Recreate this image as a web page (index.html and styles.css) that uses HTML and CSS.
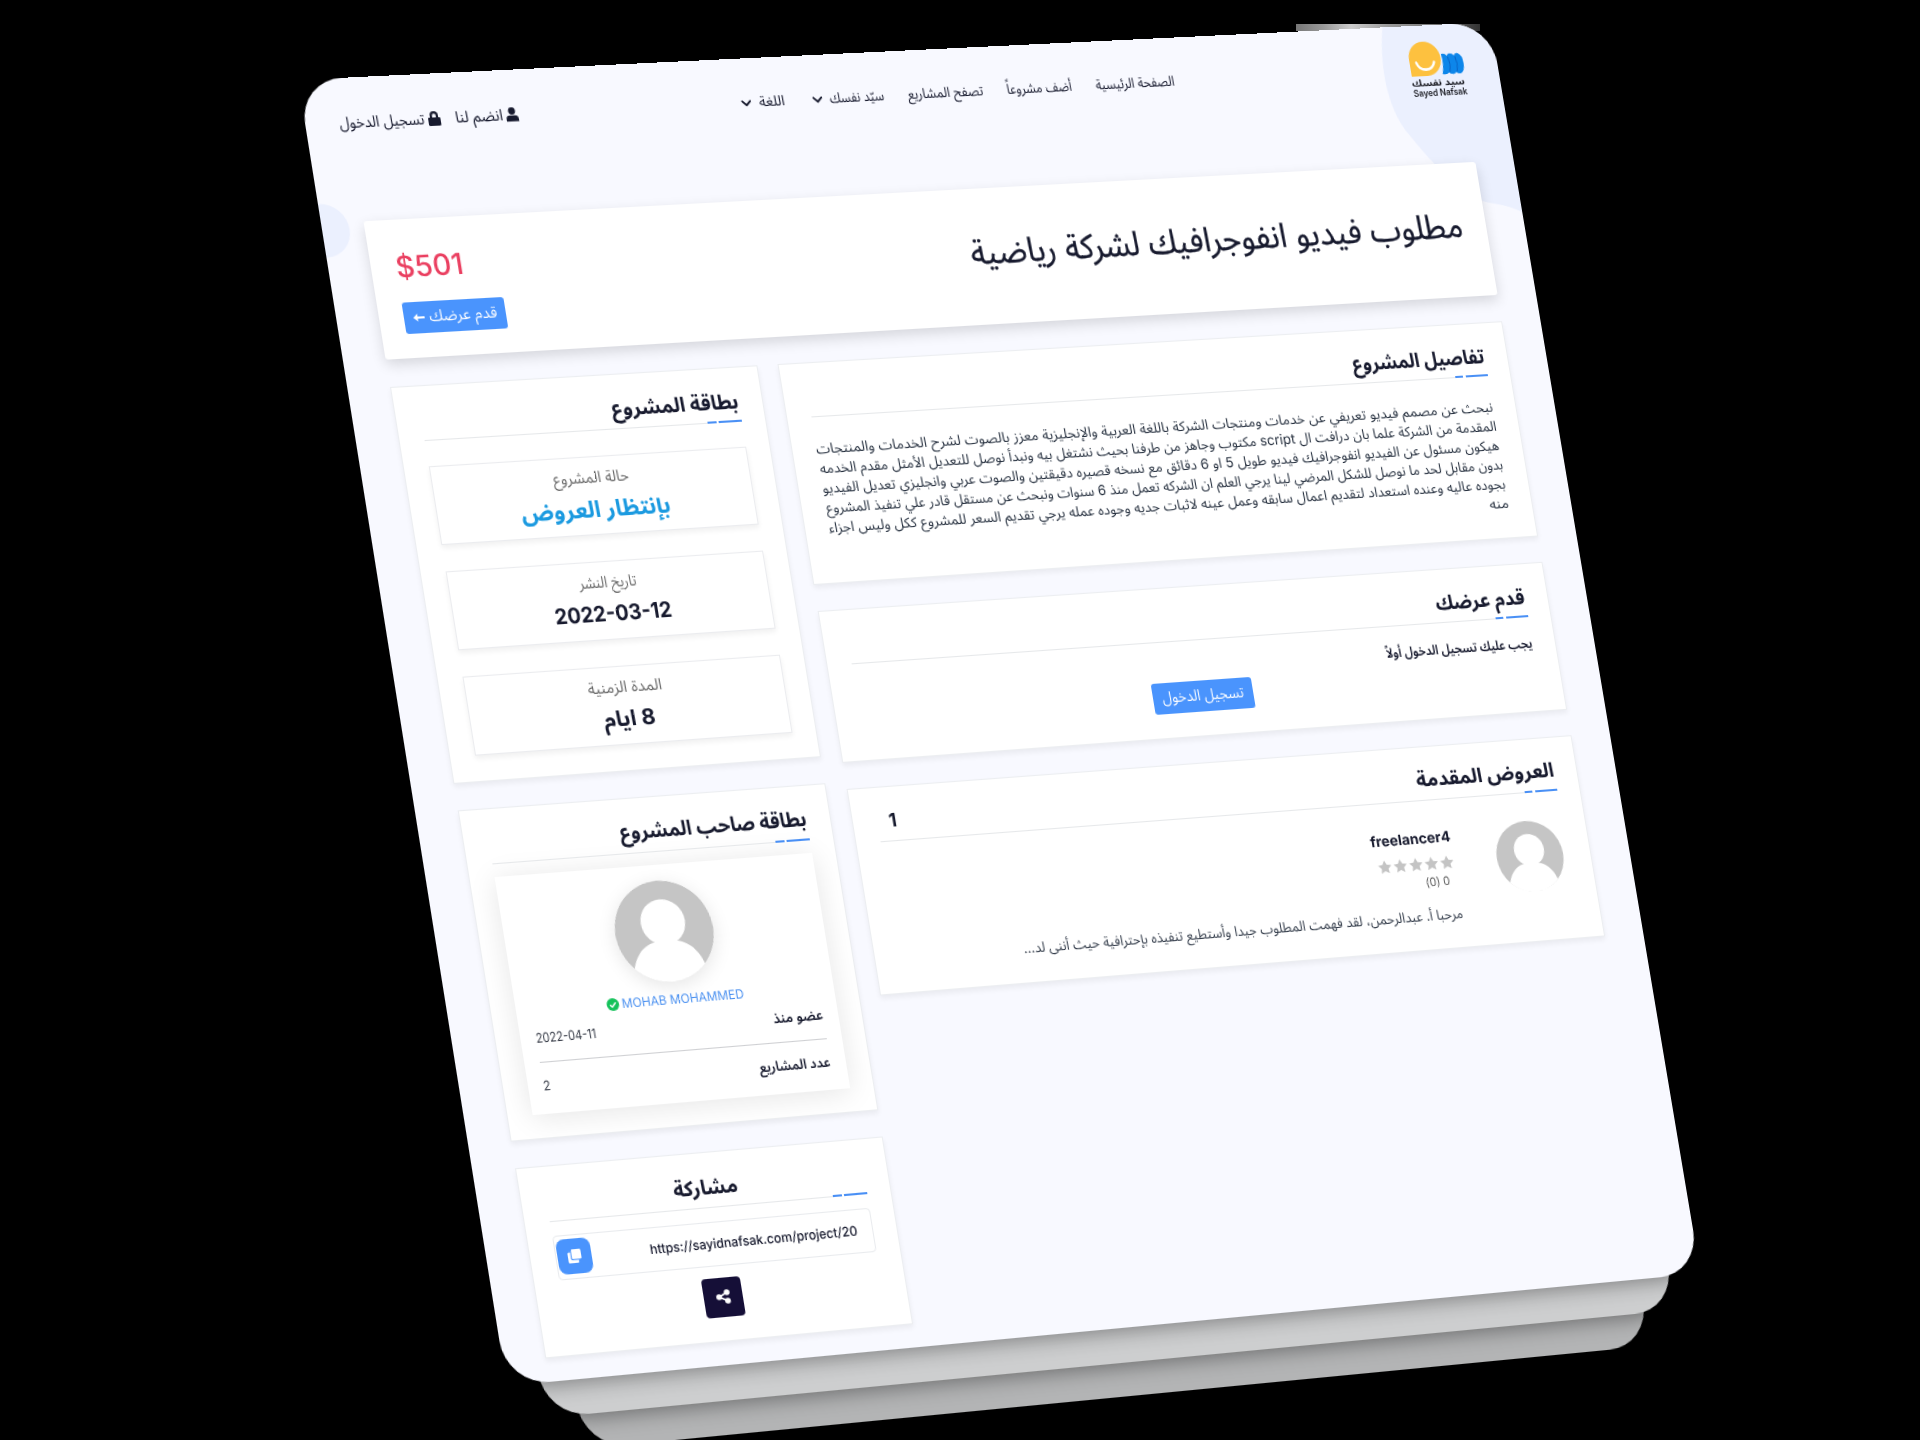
FILE: index.html
```html
<!DOCTYPE html>
<html lang="ar">
<head>
<meta charset="utf-8">
<title>سيد نفسك</title>
<link rel="stylesheet" href="styles.css">
</head>
<body>
<svg width="0" height="0" class="defs" aria-hidden="true">
  <symbol id="star" viewBox="0 0 24 24"><path d="M12 .8l3.500 7 7.700 1.100-5.600 5.400 1.400 7.700-7-3.700-7 3.700 1.400-7.700L.8 8.900l7.700-1.100z"/></symbol>
  <symbol id="chevron" viewBox="0 0 12 8"><path d="M1.500 1.500L6 6l4.500-4.500" fill="none" stroke="currentColor" stroke-width="2.100" stroke-linecap="round" stroke-linejoin="round"/></symbol>
  <symbol id="avatar" viewBox="0 0 100 100"><circle cx="50" cy="50" r="50" fill="#c5c5c5"/><circle cx="50" cy="41" r="22.500" fill="#fff"/><path d="M14 85C19 69 30 60 42 60h16c12 0 23 9 28 25a50 50 0 0 1-72 0z" fill="#fff"/></symbol>
</svg>
<div class="glare"></div>
<div class="stack">
  <div class="sheet sheet-back"></div>
  <div class="sheet sheet-mid"></div>
  <div class="page-shadow"></div>
  <div class="page" dir="rtl">
    <svg class="blobs" viewBox="0 0 1200 200" aria-hidden="true">
      <path d="M1087 0C1076 45 1080 85 1097 108C1106 122 1112 130 1122 143C1140 165 1155 176 1172 179Q1188 182 1200 189V0z"/>
      <circle cx="1" cy="144" r="25.500"/>
    </svg>

    <header class="topbar">
      <svg class="logo" viewBox="0 0 56 56">
        <path d="M1 34V16.500a16.500 17 0 1 1 17 17.500z" fill="#fdc13f"/>
        <path d="M8 20.500c2 9.500 16 9.500 18.500 0" fill="none" stroke="#fff" stroke-width="2.600" stroke-linecap="round"/>
        <path d="M35 13q4-1 5.500 2 2-3 4.500-2 2 0 3 2 2-3 4.500-2Q57 15 57 23t-4.500 10q-3 .5-4.500-1.500-2 2.500-4.500 1.500-2 0-3-1.500-2 2.500-7 1.500 3-10 1.500-20z" fill="#0d86ea"/>
        <path d="M41.500 16q2.500 7.500 0 15M49 16q2.500 7.500 0 15" fill="none" stroke="#0a62c4" stroke-width="1"/>
        <text x="0" y="44" textLength="55" lengthAdjust="spacingAndGlyphs" class="logo-ar" direction="ltr">سيد نفسك</text>
        <text x="0" y="54.500" textLength="56" lengthAdjust="spacingAndGlyphs" class="logo-en" direction="ltr">Sayed Nafsak</text>
      </svg>
      <nav class="menu">
        <a><span data-fit="80.5">الصفحة الرئيسية</span></a>
        <a><span data-fit="66">أضف مشروعاً</span></a>
        <a><span data-fit="76">تصفح المشاريع</span></a>
        <a class="has-sub"><span data-fit="54.5">سيّد نفسك</span><svg class="chev"><use href="#chevron"/></svg></a>
        <a class="has-sub"><span data-fit="25.5">اللغة</span><svg class="chev"><use href="#chevron"/></svg></a>
      </nav>
      <div class="account">
        <a><svg class="acc-ico" viewBox="0 0 12 14"><circle cx="6" cy="3.500" r="3.400"/><path d="M0 13.500v-2.300C0 8.900 1.500 7.800 3.200 7.800h5.600c1.700 0 3.200 1.100 3.200 3.400v2.300z"/></svg><span data-fit="46.5">انضم لنا</span></a>
        <a><svg class="acc-ico" viewBox="0 0 12 14"><path d="M1.200 6H2V4a4 4 0 0 1 8 0v2h.8c.7 0 1.200.5 1.200 1.200v5.600c0 .7-.5 1.200-1.200 1.200H1.200C.5 14 0 13.500 0 12.800V7.200C0 6.500.5 6 1.200 6zm3 0h3.600V4a1.800 1.800 0 0 0-3.600 0z"/></svg><span data-fit="82.5">تسجيل الدخول</span></a>
      </div>
    </header>

    <main>
      <section class="hero">
        <h1><span data-fit="505">مطلوب فيديو انفوجرافيك لشركة رياضية</span></h1>
        <div class="offer">
          <p class="price" dir="ltr"><span data-fit="65.5">$501</span></p>
          <a class="btn"><span data-fit="66">قدم عرضك</span><svg class="arrow" viewBox="0 0 12 8"><path d="M4.500 0v2.900H12v2.200H4.500V8L0 4z"/></svg></a>
        </div>
      </section>

      <div class="columns">
        <div class="col">
          <section class="card details">
            <header class="head"><h2><span data-fit="137">تفاصيل المشروع</span></h2></header>
            <p class="lines">
              <span data-fit="690">نبحث عن مصمم فيديو تعريفي عن خدمات ومنتجات الشركة باللغة العربية والإنجليزية معزز بالصوت لشرح الخدمات والمنتجات</span>
              <span data-fit="690">المقدمة من الشركة علما بان درافت ال script مكتوب وجاهز من طرفنا بحيث نشتغل بيه ونبدأ نوصل للتعديل الأمثل مقدم الخدمه</span>
              <span data-fit="690">هيكون مسئول عن الفيديو انفوجرافيك فيديو طويل 5 او 6 دقائق مع نسخه قصيره دقيقتين والصوت عربي وانجليزي تعديل الفيديو</span>
              <span data-fit="690">بدون مقابل لحد ما نوصل للشكل المرضي لينا يرجي العلم ان الشركه تعمل منذ 6 سنوات ونبحث عن مستقل قادر علي تنفيذ المشروع</span>
              <span data-fit="690">بجوده عاليه وعنده استعداد لتقديم اعمال سابقه وعمل عينه لاثبات جديه وجوده عمله يرجي تقديم السعر للمشروع ككل وليس اجزاء</span>
              <span data-fit="20">منه</span>
            </p>
          </section>

          <section class="card apply">
            <header class="head"><h2><span data-fit="92.5">قدم عرضك</span></h2></header>
            <p class="notice"><span data-fit="152">يجب عليك تسجيل الدخول أولاً</span></p>
            <a class="btn"><span data-fit="83">تسجيل الدخول</span></a>
          </section>

          <section class="card bids">
            <header class="head"><h2><span data-fit="143">العروض المقدمة</span></h2><b class="count">1</b></header>
            <div class="bid">
              <svg class="bid-avatar"><use href="#avatar"/></svg>
              <div class="bid-body">
                <h3><span data-fit="82.5">freelancer4</span></h3>
                <div class="stars"><svg><use href="#star"/></svg><svg><use href="#star"/></svg><svg><use href="#star"/></svg><svg><use href="#star"/></svg><svg><use href="#star"/></svg></div>
                <p class="rate"><span data-fit="25">0 (0)</span></p>
                <p class="bid-text"><span data-fit="448">مرحبا أ. عبدالرحمن، لقد فهمت المطلوب جيدا وأستطيع تنفيذه بإحترافية حيث أننى لد...</span></p>
              </div>
            </div>
          </section>
        </div>

        <aside class="col">
          <section class="card status">
            <header class="head"><h2><span data-fit="125">بطاقة المشروع</span></h2></header>
            <div class="facts">
              <div class="fact"><p><span data-fit="74">حالة المشروع</span></p><strong class="open"><span data-fit="146">بإنتظار العروض</span></strong></div>
              <div class="fact"><p><span data-fit="56">تاريخ النشر</span></p><strong><span data-fit="114.5">2022-03-12</span></strong></div>
              <div class="fact"><p><span data-fit="72.5">المدة الزمنية</span></p><strong><span data-fit="50.5">8 ايام</span></strong></div>
            </div>
          </section>

          <section class="card owner">
            <header class="head"><h2><span data-fit="183.5">بطاقة صاحب المشروع</span></h2></header>
            <div class="profile">
              <svg class="owner-avatar"><use href="#avatar"/></svg>
              <p class="name"><span data-fit="119.5">MOHAB MOHAMMED</span><svg viewBox="0 0 12 12"><circle cx="6" cy="6" r="6" fill="#14c25a"/><path d="M3.200 6.200l2 2 3.700-3.900" fill="none" stroke="#fff" stroke-width="1.500"/></svg></p>
              <dl>
                <div><dt><span data-fit="49">عضو منذ</span></dt><dd><span data-fit="58.5">2022-04-11</span></dd></div>
                <div><dt><span data-fit="70">عدد المشاريع</span></dt><dd><span data-fit="7">2</span></dd></div>
              </dl>
            </div>
          </section>

          <section class="card share">
            <header class="head"><h2><span data-fit="63">مشاركة</span></h2></header>
            <div class="link">
              <span class="url"><span data-fit="203.5">https://sayidnafsak.com/project/20</span></span>
              <button class="copy"><svg viewBox="0 0 14 14"><rect x="4" y="0" width="10" height="10" rx="1.500"/><path d="M2.900 3H1.500C.7 3 0 3.700 0 4.500v8c0 .8.7 1.500 1.500 1.500h8c.8 0 1.500-.7 1.500-1.500v-1.400H4.900c-1.100 0-2-.9-2-2z"/></svg></button>
            </div>
            <button class="share-btn"><svg viewBox="0 0 14 14"><path d="M11 3L3 7l8 4" fill="none" stroke="#fff" stroke-width="1.700"/><circle cx="11" cy="3" r="2.800"/><circle cx="3" cy="7" r="2.800"/><circle cx="11" cy="11" r="2.800"/></svg></button>
          </section>
        </aside>
      </div>
    </main>
  </div>
</div>
<script src="fit.js"></script>
</body>
</html>
```
FILE: styles.css
```css
* { box-sizing: border-box; margin: 0; padding: 0; }

body {
  width: 1920px;
  height: 1440px;
  overflow: hidden;
  position: relative;
  background: #000;
  color: #171a2e;
  font-family: "Inter", "Noto Sans Arabic", "DejaVu Sans", sans-serif;
}

.defs { position: absolute; }

/* tilted stack of sheets */
.stack {
  position: relative;
  width: 1200px;
  height: 1236px;
  transform-origin: 0 0;
  transform: matrix3d(1.046875, -0.0473, 0, 0.0000357667, 0.165081, 1.046756, 0, -0.0000071278, 0, 0, 1, 0, 298.1, 79.9, 0, 1);
}

.sheet {
  position: absolute;
  height: 300px;
  border-radius: 42px;
}

.sheet-back { left: 64px; right: 64px; bottom: -64.5px; background: #b3b4b5; }

.sheet-mid {
  left: 32px;
  right: 32px;
  bottom: -32.5px;
  background: #cdcecf;
  box-shadow: 0 3px 20px rgba(0, 0, 0, .4);
}

.page-shadow {
  position: absolute;
  inset: 900px 0 0;
  border-radius: 42px;
  box-shadow: 0 3px 20px rgba(0, 0, 0, .38);
}

/* light caught on the top edge of the stack */
.glare {
  position: absolute;
  left: 1296px;
  top: 24px;
  width: 184px;
  height: 7px;
  background: linear-gradient(90deg, #777, #999 15%, #ccc 30%, #999 50%, #777 75%, #333);
}

.page {
  position: relative;
  width: 1200px;
  height: 1236px;
  border-radius: 42px;
  overflow: hidden;
  background: #f8f9ff;
}

.blobs {
  position: absolute;
  left: 0;
  top: 0;
  width: 1200px;
  height: 200px;
  fill: #ebf0fe;
}

[data-fit] {
  display: inline-block;
  white-space: nowrap;
  transform-origin: 100% 50%;
}

.topbar {
  position: relative;
  display: flex;
  align-items: center;
  height: 87px;
  margin-bottom: 50px;
  padding: 0 36.5px 0 33px;
}

.logo { width: 56px; height: 56px; overflow: visible; }
.logo-ar { font: 700 9px "Noto Sans Arabic", "DejaVu Sans", sans-serif; fill: #17181f; }
.logo-en { font: 600 9px "Inter", sans-serif; fill: #17181f; }

.menu {
  display: flex;
  gap: 24px;
  margin: -2px 243px 0 0;
  font-size: 13.5px;
}

.menu a { display: flex; align-items: center; gap: 7px; }
.has-sub + .has-sub { margin-right: 4px; }
.chev { width: 10.5px; height: 7px; margin-top: 2px; }

.account { display: flex; gap: 14px; margin: -1px auto 0 0; font-size: 15px; }
.account a { display: flex; align-items: center; gap: 3.5px; }
.acc-ico { width: 12px; height: 14px; fill: #171a2e; }

main { position: relative; padding: 0 40px 0 41px; }

.hero {
  display: flex;
  justify-content: space-between;
  height: 132px;
  margin-bottom: 26px;
  padding: 0 24px;
  border-radius: 3px;
  background: #fff;
  box-shadow: 0 5px 13px rgba(0, 0, 0, .14);
}

.hero h1 {
  align-self: center;
  margin-top: -10px;
  font-size: 33px;
  font-weight: 400;
  line-height: 40px;
  -webkit-text-stroke: .3px #171a2e;
}

.offer { display: flex; flex-direction: column; align-items: flex-end; padding-top: 28px; }
.price { color: #ea3f60; font-size: 28px; font-weight: 500; line-height: 34px; margin-bottom: 17px; }
.price [data-fit] { transform-origin: 0 50%; }

.btn {
  display: flex;
  align-items: center;
  justify-content: center;
  gap: 4px;
  height: 29.5px;
  padding-bottom: 2px;
  border-radius: 3px;
  background: #4a94fd;
  color: #fff;
  font-size: 15px;
}

.offer .btn { width: 99px; }
.arrow { width: 11.5px; height: 8px; margin-top: 3px; fill: #fff; }

.columns { display: grid; grid-template-columns: 739px 360px; gap: 20px; }
.col { display: flex; flex-direction: column; gap: 25px; }

.card {
  border: 1px solid #eceef1;
  background: #fff;
  padding: 0 23.5px;
  box-shadow: 0 3px 5px rgba(0, 0, 0, .06);
}

.head {
  position: relative;
  display: flex;
  justify-content: space-between;
  align-items: center;
  height: 52px;
  padding-top: 12px;
  border-bottom: 1px solid #e6e8ea;
}

.head h2 { font-size: 19.5px; font-weight: 700; line-height: 24px; }

.head::after {
  content: "";
  position: absolute;
  right: 0;
  bottom: -1px;
  width: 34px;
  height: 2px;
  background: linear-gradient(270deg, #4a90f5 23px, #fff 23px, #fff 25.5px, #4a90f5 25.5px);
}

.details { height: 213px; }
.lines { padding-top: 21px; font-size: 13.5px; line-height: 19.1px; color: #26303f; }
.lines span { display: block; width: max-content; }

.apply { height: 145.5px; }
.notice { padding-top: 14.5px; font-size: 13px; font-weight: 600; line-height: 20px; }
.apply .btn { width: 102px; margin: 4.5px auto 0; }

.bids { height: 198px; }
.count { font-size: 18px; padding-left: 12px; }

.bid { display: flex; gap: 43.5px; padding: 27px 5px 0 0; }
.bid-avatar { width: 69px; height: 69px; flex: none; }
.bid h3 { margin-top: -1px; font-size: 14px; font-weight: 700; line-height: 20px; }
.stars { display: flex; gap: 1.3px; margin-top: 8px; padding-right: 1px; }
.stars svg { width: 14.5px; height: 14.5px; fill: #c4c4c4; }
.rate { margin-top: 3px; padding-right: 8px; font-size: 11.5px; line-height: 16px; color: #555; }
.bid-text { margin-top: 12.5px; font-size: 13.5px; line-height: 22px; color: #333c4a; }

.status { height: 376.5px; }
.facts { display: flex; flex-direction: column; gap: 25px; padding-top: 23.5px; }

.fact {
  display: flex;
  flex-direction: column;
  align-items: center;
  height: 75px;
  padding-top: 6px;
  border: 1px solid #ebecef;
  box-shadow: 0 3px 5px rgba(0, 0, 0, .06);
}

.fact p { font-size: 15px; line-height: 26px; color: #666; }
.fact strong { font-size: 20.5px; font-weight: 700; line-height: 34px; }
.fact .open { font-size: 22px; color: #1b9ae0; }

.owner { height: 313.5px; }

.profile {
  display: flex;
  flex-direction: column;
  align-items: center;
  height: 224.5px;
  margin-top: 12.5px;
  padding: 14.5px 15px 0;
  background: #fff;
  box-shadow: 0 3px 26px rgba(0, 0, 0, .1);
}

.owner-avatar {
  width: 96px;
  height: 96px;
  border-radius: 50%;
  box-shadow: 0 4px 18px rgba(0, 0, 0, .1);
}

.name {
  display: flex;
  align-items: center;
  gap: 3px;
  margin-top: 8.5px;
  font-size: 12px;
  line-height: 18px;
  color: #4a90f0;
}

.name svg { width: 12px; height: 12px; }

dl { align-self: stretch; margin-top: 7px; }
dl div { display: flex; justify-content: space-between; line-height: 20px; font-size: 13px; }
dl div + div { margin-top: 12px; padding-top: 12px; border-top: 1px solid #cfd0d3; }
dt { font-weight: 600; margin-top: -1px; }
dd { font-size: 12.5px; color: #333844; }

.share { height: 179px; }
.share .head { justify-content: center; padding-top: 13px; }

.link {
  display: flex;
  align-items: center;
  justify-content: space-between;
  height: 42px;
  margin-top: 12.5px;
  padding: 0 14px 0 1px;
  border: 1px solid #e9ebee;
  border-radius: 4px;
  font-size: 12.5px;
  font-weight: 500;
}

button { display: flex; align-items: center; justify-content: center; border: 0; }

.copy { width: 33px; height: 33px; border-radius: 8px; background: #4a94fd; }
.copy svg { width: 13px; height: 13px; fill: #fff; }

.share-btn { width: 38px; height: 37px; margin: 11px auto 0; border-radius: 4px; background: #150f37; }
.share-btn svg { width: 14px; height: 14px; fill: #fff; }
```
FILE: fit.js
```js
document.querySelectorAll('[data-fit]').forEach(function (el) {
  var target = parseFloat(el.dataset.fit);
  var width = parseFloat(getComputedStyle(el).width);
  el.style.transform = 'scaleX(' + target / width + ')';
  var side = getComputedStyle(el).direction === 'rtl' ? 'marginLeft' : 'marginRight';
  el.style[side] = (target - width) + 'px';
});
```
